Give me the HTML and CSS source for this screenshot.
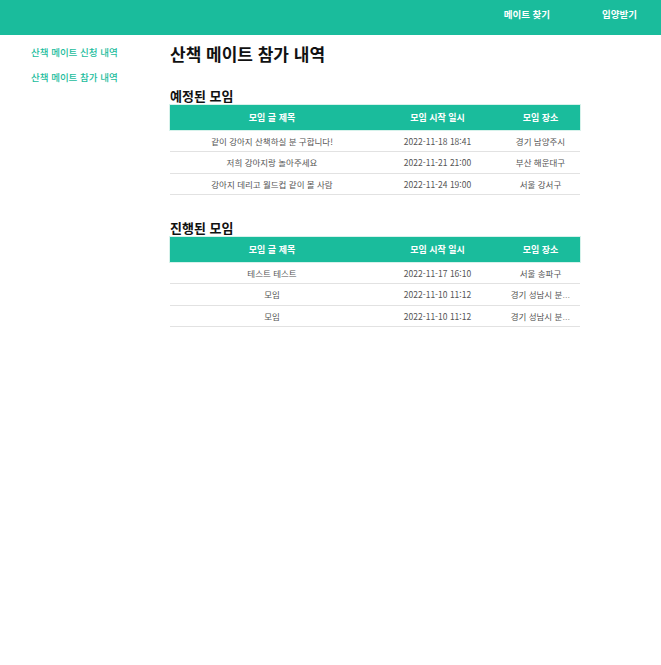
FILE: index.html
```html
<!DOCTYPE html>
<html lang="ko">
<head>
<meta charset="utf-8">
<link rel="stylesheet" href="styles.css">
</head>
<body>
<header class="topbar">
  <nav class="topnav">
    <a class="topnav-item">메이트 찾기</a>
    <a class="topnav-item">입양받기</a>
  </nav>
</header>
<div class="layout">
  <aside class="sidebar">
    <a class="side-link">산책 메이트 신청 내역</a>
    <a class="side-link">산책 메이트 참가 내역</a>
  </aside>
  <main class="content">
    <h1 class="page-title">산책 메이트 참가 내역</h1>
    <section class="section">
      <h2 class="section-title">예정된 모임</h2>
      <table class="meet-table">
        <thead>
          <tr><th class="c-title">모임 글 제목</th><th class="c-date">모임 시작 일시</th><th class="c-place">모임 장소</th></tr>
        </thead>
        <tbody>
          <tr><td>같이 강아지 산책하실 분 구합니다!</td><td>2022-11-18 18:41</td><td>경기 남양주시</td></tr>
          <tr><td>저희 강아지랑 놀아주세요</td><td>2022-11-21 21:00</td><td>부산 해운대구</td></tr>
          <tr><td>강아지 데리고 월드컵 같이 볼 사람</td><td>2022-11-24 19:00</td><td>서울 강서구</td></tr>
        </tbody>
      </table>
    </section>
    <section class="section">
      <h2 class="section-title">진행된 모임</h2>
      <table class="meet-table">
        <thead>
          <tr><th class="c-title">모임 글 제목</th><th class="c-date">모임 시작 일시</th><th class="c-place">모임 장소</th></tr>
        </thead>
        <tbody>
          <tr><td>테스트 테스트</td><td>2022-11-17 16:10</td><td>서울 송파구</td></tr>
          <tr><td>모임</td><td>2022-11-10 11:12</td><td>경기 성남시 분<span class="dots">…</span></td></tr>
          <tr><td>모임</td><td>2022-11-10 11:12</td><td>경기 성남시 분<span class="dots">…</span></td></tr>
        </tbody>
      </table>
    </section>
  </main>
</div>
</body>
</html>
```
FILE: styles.css
```css
* { box-sizing: border-box; }
body {
  margin: 0;
  font-family: "Noto Sans CJK KR", "Noto Sans", sans-serif;
  color: #111;
  background: #fff;
}
.topbar {
  height: 35px;
  background: #1abc9c;
  display: flex;
  justify-content: flex-end;
}
.topnav {
  display: flex;
  gap: 52px;
  padding-right: 24px;
}
.topnav-item {
  color: #fff;
  font-size: 9.5px;
  font-weight: 700;
  line-height: 14px;
  padding-top: 7px;
  white-space: nowrap;
}
.layout {
  display: flex;
}
.sidebar {
  width: 170px;
  padding: 10px 0 0 31px;
  display: flex;
  flex-direction: column;
  gap: 11px;
}
.side-link {
  color: #1abc9c;
  font-size: 9.5px;
  font-weight: 500;
  line-height: 14px;
}
.content {
  width: 410px;
}
.page-title {
  margin: 7px 0 0;
  font-size: 17px;
  font-weight: 700;
  line-height: 24px;
}
.section { margin-top: 22px; }
.section + .section { margin-top: 25px; }
.section-title {
  margin: 0 0 1px;
  font-size: 13px;
  font-weight: 700;
  line-height: 16px;
}
.meet-table {
  width: 100%;
  border-collapse: collapse;
  table-layout: fixed;
  font-size: 8.5px;
}
.meet-table thead tr {
  outline: 1px solid #d6f2eb;
}
.meet-table th {
  background: #1abc9c;
  color: #fff;
  font-size: 9px;
  font-weight: 700;
  height: 25px;
  padding: 0;
}
.meet-table td {
  text-align: center;
  color: #555;
  height: 21.5px;
  padding: 0;
  border-bottom: 1px solid #e2e2e2;
  white-space: nowrap;
}
.dots {
  font-family: "Liberation Sans", sans-serif;
  font-size: 8px;
}
.c-title { width: 204px; }
.c-date { width: 127px; }
.c-place { width: 79px; }
```
